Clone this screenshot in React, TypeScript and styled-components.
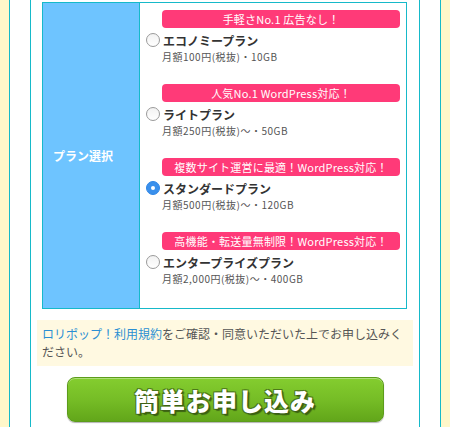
import React from "react";
import styled, { createGlobalStyle } from "styled-components";

const Global = createGlobalStyle`
  html, body { margin: 0; padding: 0; }
  body {
    background: #fff7c9;
    font-family: "Noto Sans CJK JP", "Noto Sans", sans-serif;
    color: #444;
  }
`;

const Page = styled.div`
  margin: 0 9px;
  background: #fff;
  border-left: 1px solid #16b9c9;
  border-right: 1px solid #16b9c9;
  padding: 0 20px;
  height: 427px;
  overflow: hidden;
`;

const Inner = styled.div`
  border-left: 1px solid #16b9c9;
  border-right: 1px solid #16b9c9;
  height: 100%;
  padding-top: 2px;
  box-sizing: border-box;
`;

const Table = styled.div`
  margin: 0 12px 0 11px;
  border: 1px solid #16b9c9;
  display: flex;
`;

const HeadCell = styled.div`
  width: 97px;
  flex: none;
  background: #6ec4ff;
  border-right: 1px solid #16b9c9;
  display: flex;
  align-items: center;
  padding-left: 10px;
  box-sizing: border-box;
  color: #fff;
  font-size: 12px;
  font-weight: bold;
`;

const BodyCell = styled.div`
  flex: 1;
  padding: 7px 6px 22px 6px;
  display: flex;
  flex-direction: column;
  gap: 20px;
`;

const Plan = styled.div`
  display: flex;
  flex-direction: column;
`;

const Badge = styled.div`
  margin-left: 16px;
  height: 18px;
  background: #ff3a78;
  border-radius: 4px;
  color: #fff;
  font-size: 11px;
  line-height: 18px;
  text-align: center;
  margin-bottom: 4px;
  letter-spacing: 0.2px;
`;

const NameRow = styled.label`
  display: flex;
  align-items: center;
  height: 16px;
  font-size: 12px;
  font-weight: bold;
  color: #333;
  gap: 3px;
  margin-bottom: 2px;
`;

const Radio = styled.span<{ $on?: boolean }>`
  width: 14px;
  height: 14px;
  box-sizing: border-box;
  border-radius: 50%;
  flex: none;
  position: relative;
  border: 1px solid ${(p) => (p.$on ? "#2f86e6" : "#9a9a9a")};
  background: ${(p) =>
    p.$on ? "#3a90ec" : "linear-gradient(#f2f2f2, #ffffff)"};
  &::after {
    content: "";
    display: ${(p) => (p.$on ? "block" : "none")};
    position: absolute;
    left: 50%;
    top: 50%;
    width: 4px;
    height: 4px;
    margin: -2px 0 0 -2px;
    border-radius: 50%;
    background: #fff;
  }
`;

const Sub = styled.div`
  margin-left: 16px;
  font-size: 10px;
  line-height: 14px;
  color: #555;
  letter-spacing: 0.5px;
`;

const Notes = styled.p`
  margin: 11px 6px 0 6px;
  background: #fff9e1;
  padding: 5px 5px;
  font-size: 12px;
  line-height: 18px;
  color: #555;
`;

const Link = styled.a`
  color: #2b8fd3;
  text-decoration: none;
`;

const ButtonWrap = styled.div`
  display: flex;
  justify-content: center;
  margin-top: 11px;
`;

const Button = styled.button`
  width: 317px;
  height: 45px;
  border-radius: 8px;
  border: 1px solid #5c9c1b;
  background: linear-gradient(#84cd2f 0%, #76bd26 50%, #62a61a 100%);
  box-shadow: inset 0 1px 0 rgba(255, 255, 255, 0.35), 0 1px 1px rgba(0, 0, 0, 0.3);
  color: #fff;
  font-family: "Noto Sans CJK JP", sans-serif;
  font-size: 25px;
  font-weight: 900;
  letter-spacing: 1px;
  padding: 0;
  cursor: pointer;
  text-shadow: 1px 1px 0 #3b5f14, -1px -1px 0 #4c7a1a, 1px -1px 0 #4c7a1a,
    -1px 1px 0 #4c7a1a, 2px 2px 1px rgba(0, 0, 0, 0.45);
`;

const plans = [
  { badge: "手軽さNo.1 広告なし！", name: "エコノミープラン", sub: "月額100円(税抜)・10GB" },
  { badge: "人気No.1 WordPress対応！", name: "ライトプラン", sub: "月額250円(税抜)〜・50GB" },
  { badge: "複数サイト運営に最適！WordPress対応！", name: "スタンダードプラン", sub: "月額500円(税抜)〜・120GB", on: true },
  { badge: "高機能・転送量無制限！WordPress対応！", name: "エンタープライズプラン", sub: "月額2,000円(税抜)〜・400GB" },
];

export default function App() {
  return (
    <>
      <Global />
      <Page>
        <Inner>
          <Table>
            <HeadCell>プラン選択</HeadCell>
            <BodyCell>
              {plans.map((p) => (
                <Plan key={p.name}>
                  <Badge>{p.badge}</Badge>
                  <NameRow>
                    <Radio $on={p.on} />
                    {p.name}
                  </NameRow>
                  <Sub>{p.sub}</Sub>
                </Plan>
              ))}
            </BodyCell>
          </Table>
          <Notes>
            <Link href="#">ロリポップ！利用規約</Link>
            <span>をご確認・同意いただいた上でお申し込みください。</span>
          </Notes>
          <ButtonWrap>
            <Button>簡単お申し込み</Button>
          </ButtonWrap>
        </Inner>
      </Page>
    </>
  );
}
